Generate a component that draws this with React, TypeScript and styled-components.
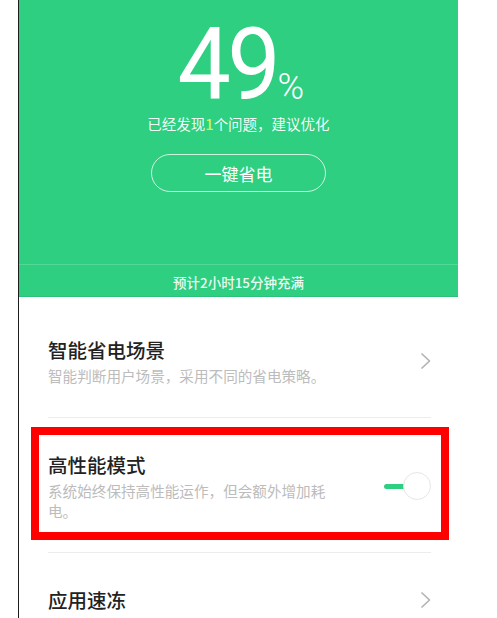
import React from "react";
import styled, { createGlobalStyle } from "styled-components";

const GlobalStyle = createGlobalStyle`
  html, body {
    margin: 0;
    padding: 0;
    background: #ffffff;
  }
  body {
    font-family: "Noto Sans CJK SC", "Noto Sans", sans-serif;
  }
`;

const green = "#2ecf81";

const Chevron: React.FunctionComponent = (): React.ReactElement => (
  <svg width="12" height="18" viewBox="0 0 12 18" fill="none">
    <path
      d="M2 2 L9.5 9 L2 16"
      stroke="#b3b3b3"
      strokeWidth="1.7"
      strokeLinecap="round"
      strokeLinejoin="round"
    />
  </svg>
);

interface ItemProps {
  title: string;
  desc?: string;
  pad: string;
  trailing: React.ReactNode;
}

const SettingItem: React.FunctionComponent<ItemProps> = ({
  title,
  desc,
  pad,
  trailing,
}): React.ReactElement => (
  <Row $pad={pad}>
    <Texts>
      <Title>{title}</Title>
      {desc && <Desc>{desc}</Desc>}
    </Texts>
    {trailing}
  </Row>
);

const App: React.FunctionComponent = (): React.ReactElement => {
  return (
    <>
      <GlobalStyle />
      <Phone>
        <Hero>
          <Percent>
            <Digits>49</Digits>
            <Sign>%</Sign>
          </Percent>
          <Hint>
            已经发现<Count>1</Count>个问题，建议优化
          </Hint>
          <SaveButton type="button">一键省电</SaveButton>
        </Hero>
        <ChargeStrip>预计2小时15分钟充满</ChargeStrip>

        <List>
          <SettingItem
            title="智能省电场景"
            desc="智能判断用户场景，采用不同的省电策略。"
            pad="39px 26px 31px 29px"
            trailing={<Chevron />}
          />
          <Divider />
          <Highlight>
            <SettingItem
              title="高性能模式"
              desc="系统始终保持高性能运作，但会额外增加耗电。"
              pad="16px 10px 11px 9px"
              trailing={
                <Switch>
                  <Track />
                  <Knob />
                </Switch>
              }
            />
          </Highlight>
          <Divider $top={12} />
          <SettingItem
            title="应用速冻"
            pad="33px 26px 20px 29px"
            trailing={<Chevron />}
          />
        </List>
      </Phone>
    </>
  );
};

const Phone = styled.div`
  margin-left: 18px;
  width: 439px;
  min-height: 100vh;
  border-left: 1px solid #1c1c1c;
  background: #ffffff;
  overflow: hidden;
`;

const Hero = styled.section`
  height: 264px;
  box-sizing: border-box;
  padding-top: 16px;
  background: ${green};
  display: flex;
  flex-direction: column;
  align-items: center;
  color: #ffffff;
`;

const Percent = styled.div`
  display: flex;
  align-items: baseline;
  height: 98px;
  line-height: 98px;
  font-family: Roboto, "Open Sans", sans-serif;
  font-weight: 400;
  margin-left: 2px;
`;

const Digits = styled.span`
  font-size: 100px;
  letter-spacing: -4px;
  display: inline-block;
  transform: scaleX(0.95);
`;

const Sign = styled.span`
  font-size: 36px;
  line-height: 36px;
  font-weight: 300;
  margin-left: -2px;
`;

const Hint = styled.div`
  font-size: 14.5px;
  line-height: 20px;
  color: rgba(255, 255, 255, 0.95);
`;

const Count = styled.span`
  color: #cff35a;
  font-weight: 500;
`;

const SaveButton = styled.button`
  margin-top: 20px;
  width: 175px;
  height: 38px;
  border-radius: 19px;
  border: 1.5px solid rgba(255, 255, 255, 0.75);
  background: transparent;
  color: #ffffff;
  font-family: "Noto Sans CJK SC", sans-serif;
  font-size: 17px;
  font-weight: 400;
  padding: 0;
  cursor: pointer;
`;

const ChargeStrip = styled.div`
  height: 33px;
  box-sizing: border-box;
  border-top: 1px solid rgba(255, 255, 255, 0.18);
  border-bottom: 1px solid #2bbf77;
  background: ${green};
  display: flex;
  align-items: center;
  justify-content: center;
  padding-top: 3px;
  font-size: 13.5px;
  font-weight: 500;
  color: rgba(255, 255, 255, 0.92);
`;

const List = styled.div`
  display: flex;
  flex-direction: column;
`;

const Row = styled.div<{ $pad: string }>`
  display: flex;
  align-items: center;
  justify-content: space-between;
  padding: ${({ $pad }) => $pad};
`;

const Texts = styled.div`
  display: flex;
  flex-direction: column;
  gap: 2px;
`;

const Title = styled.div`
  font-size: 19.5px;
  line-height: 28px;
  font-weight: 500;
  color: #222222;
`;

const Desc = styled.div`
  max-width: 285px;
  font-size: 14.6px;
  line-height: 20px;
  color: #bcbcbc;
`;

const Divider = styled.div<{ $top?: number }>`
  height: 1px;
  margin: ${({ $top = 0 }) => `${$top}px 27px 0 29px`};
  background: #ececec;
`;

const Highlight = styled.div`
  margin: 9px 9px 0 12px;
  border: 8px solid #ff0000;
`;

const Switch = styled.div`
  position: relative;
  width: 48px;
  height: 28px;
  flex-shrink: 0;
`;

const Track = styled.div`
  position: absolute;
  left: 1px;
  top: 11.5px;
  width: 30px;
  height: 5px;
  border-radius: 3px;
  background: ${green};
`;

const Knob = styled.div`
  position: absolute;
  right: 0;
  top: 0;
  width: 26px;
  height: 26px;
  border-radius: 50%;
  background: #ffffff;
  border: 1px solid #e6e6e6;
`;

export default App;
